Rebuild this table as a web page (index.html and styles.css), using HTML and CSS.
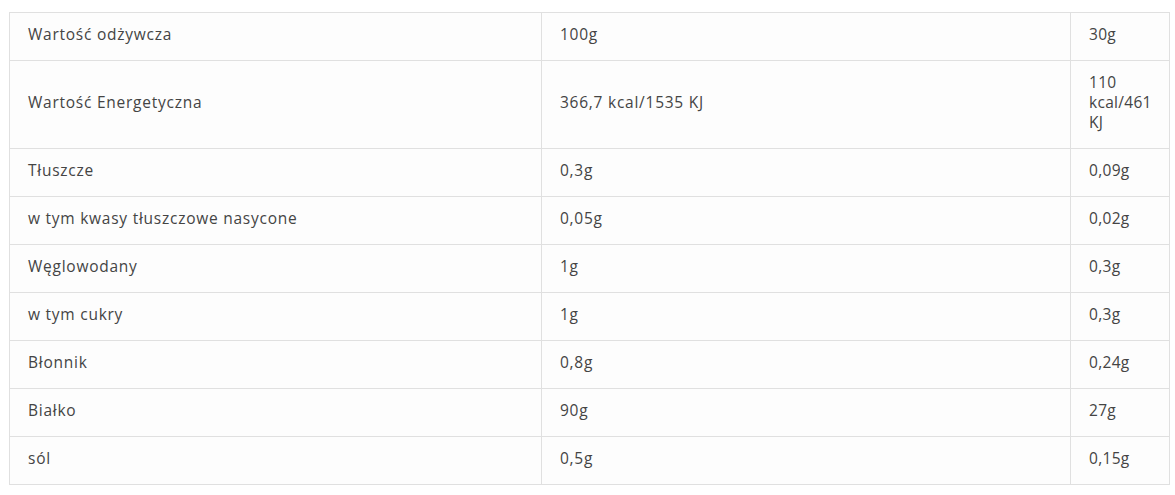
FILE: index.html
```html
<!DOCTYPE html>
<html lang="pl">
<head>
<meta charset="utf-8">
<link rel="stylesheet" href="styles.css">
</head>
<body>
<table class="nutri">
  <colgroup><col class="c1"><col class="c2"><col class="c3"></colgroup>
  <tbody>
    <tr><td>Wartość odżywcza</td><td>100g</td><td>30g</td></tr>
    <tr><td>Wartość Energetyczna</td><td>366,7 kcal/1535 KJ</td><td>110 kcal/461 KJ</td></tr>
    <tr><td>Tłuszcze</td><td>0,3g</td><td>0,09g</td></tr>
    <tr><td>w tym kwasy tłuszczowe nasycone</td><td>0,05g</td><td>0,02g</td></tr>
    <tr><td>Węglowodany</td><td>1g</td><td>0,3g</td></tr>
    <tr><td>w tym cukry</td><td>1g</td><td>0,3g</td></tr>
    <tr><td>Błonnik</td><td>0,8g</td><td>0,24g</td></tr>
    <tr><td>Białko</td><td>90g</td><td>27g</td></tr>
    <tr><td>sól</td><td>0,5g</td><td>0,15g</td></tr>
  </tbody>
</table>
</body>
</html>
```
FILE: styles.css
```css
html, body {
  margin: 0;
  background: #ffffff;
}
body {
  padding: 12px 0 0 9px;
  font-family: "Open Sans", "Liberation Sans", sans-serif;
  color: #444444;
}
.nutri {
  border-collapse: collapse;
  table-layout: fixed;
  width: 1160px;
  background: #fdfdfd;
}
.c1 { width: 532px; }
.c2 { width: 529px; }
.c3 { width: 99px; }
.nutri td {
  border: 1px solid #e0e0e0;
  padding: 11px 18px 16px;
  font-size: 15.5px;
  letter-spacing: 0.75px;
  line-height: 20px;
  vertical-align: middle;
}
.nutri td:last-child {
  letter-spacing: 0.3px;
}
```
